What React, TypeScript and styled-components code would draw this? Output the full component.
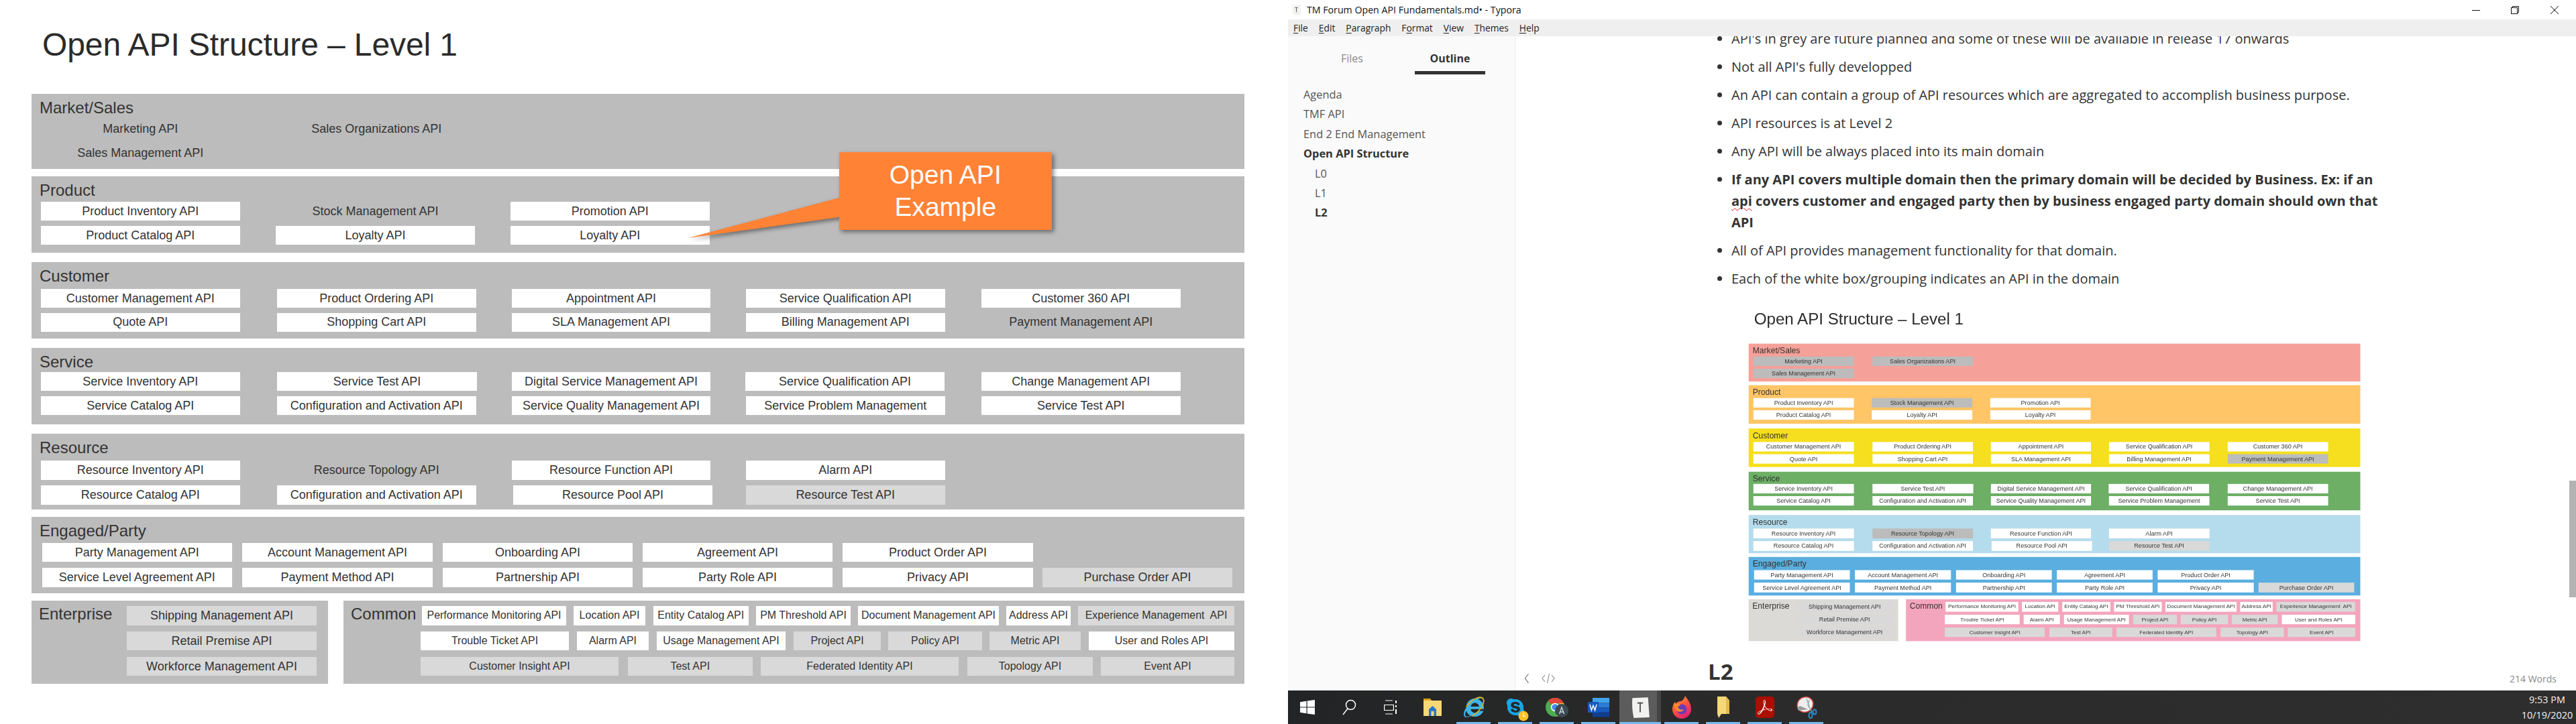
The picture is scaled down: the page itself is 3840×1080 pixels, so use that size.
import React from 'react';
import styled, { createGlobalStyle } from 'styled-components';
import { FaInternetExplorer, FaSkype } from 'react-icons/fa';
import { SiAdobeacrobatreader } from 'react-icons/si';

const Global = createGlobalStyle`
  html, body { margin: 0; padding: 0; background: #fff; }
  #root { width: 3840px; height: 1080px; overflow: hidden; }
`;

type Kind = 'w' | 'g' | 'l';
type Cell = [string, number, number, Kind];
type RowData = { y0: number; y1: number; cells: Cell[] };
type BandData = { name: string; color: string; top: number; bottom: number; rows: RowData[] };

const C1: [number, number] = [60.5, 358];
const C2: [number, number] = [412.5, 710];
const C3: [number, number] = [763, 1059];
const C4: [number, number] = [1111.5, 1409];
const C5: [number, number] = [1462.5, 1760];
const c = (t: string, col: [number, number], k: Kind = 'w'): Cell => [t, col[0], col[1], k];

const bands: BandData[] = [
  {
    name: 'Market/Sales', color: '#f5a098', top: 139.5, bottom: 252, rows: [
      { y0: 178, y1: 206, cells: [c('Marketing API', C1, 'g'), c('Sales Organizations API', C2, 'g')] },
      { y0: 214, y1: 242, cells: [c('Sales Management API', C1, 'g')] },
    ],
  },
  {
    name: 'Product', color: '#ffc566', top: 263, bottom: 377, rows: [
      { y0: 301, y1: 329, cells: [c('Product Inventory API', C1), c('Stock Management API', [411, 708], 'g'), c('Promotion API', [761, 1057.5])] },
      { y0: 337, y1: 365, cells: [c('Product Catalog API', C1), c('Loyalty API', [411, 708]), c('Loyalty API', [761, 1057.5])] },
    ],
  },
  {
    name: 'Customer', color: '#f5df1e', top: 391, bottom: 504.5, rows: [
      { y0: 431, y1: 459, cells: [c('Customer Management API', C1), c('Product Ordering API', C2), c('Appointment API', C3), c('Service Qualification API', C4), c('Customer 360 API', C5)] },
      { y0: 466.5, y1: 495, cells: [c('Quote API', C1), c('Shopping Cart API', C2), c('SLA Management API', C3), c('Billing Management API', C4), c('Payment Management API', C5, 'g')] },
    ],
  },
  {
    name: 'Service', color: '#6caf65', top: 519, bottom: 633, rows: [
      { y0: 555, y1: 583, cells: [c('Service Inventory API', C1), c('Service Test API', [413, 711]), c('Digital Service Management API', C3), c('Service Qualification API', [1111, 1408]), c('Change Management API', C5)] },
      { y0: 591, y1: 619, cells: [c('Service Catalog API', C1), c('Configuration and Activation API', C2), c('Service Quality Management API', C3), c('Service Problem Management', C4), c('Service Test API', C5)] },
    ],
  },
  {
    name: 'Resource', color: '#b4dcec', top: 647, bottom: 760, rows: [
      { y0: 687, y1: 716, cells: [c('Resource Inventory API', C1), c('Resource Topology API', C2, 'g'), c('Resource Function API', C3), c('Alarm API', C4)] },
      { y0: 723.5, y1: 752.5, cells: [c('Resource Catalog API', C1), c('Configuration and Activation API', C2), c('Resource Pool API', [765, 1062]), c('Resource Test API', C4, 'l')] },
    ],
  },
  {
    name: 'Engaged/Party', color: '#5aaee0', top: 771, bottom: 885, rows: [
      { y0: 810, y1: 838, cells: [c('Party Management API', [62.5, 346]), c('Account Management API', [361, 645]), c('Onboarding API', [660, 943]), c('Agreement API', [958, 1241]), c('Product Order API', [1256, 1540])] },
      { y0: 847, y1: 876, cells: [c('Service Level Agreement API', [62.5, 346]), c('Payment Method API', [361, 645]), c('Partnership API', [660, 943]), c('Party Role API', [958, 1241]), c('Privacy API', [1256, 1540]), c('Purchase Order API', [1554, 1837], 'l')] },
    ],
  },
];

const enterpriseRows: RowData[] = [
  { y0: 904, y1: 932.5, cells: [c('Shipping Management API', [189, 472], 'l')] },
  { y0: 942, y1: 970, cells: [c('Retail Premise API', [189, 472], 'l')] },
  { y0: 980, y1: 1008, cells: [c('Workforce Management API', [189, 472], 'l')] },
];

const commonRows: RowData[] = [
  { y0: 904, y1: 932.5, cells: [
    c('Performance Monitoring API', [629, 844]), c('Location API', [855, 962]), c('Entity Catalog API', [974, 1115.5]),
    c('PM Threshold API', [1127, 1268]), c('Document Management API', [1279, 1489]), c('Address API', [1500, 1596]),
    c('Experience Management\u00a0 API', [1607, 1840], 'l'),
  ] },
  { y0: 942, y1: 970, cells: [
    c('Trouble Ticket API', [627, 848]), c('Alarm API', [860, 967]), c('Usage Management API', [979, 1171]),
    c('Project API', [1183, 1313], 'l'), c('Policy API', [1324, 1464], 'l'), c('Metric API', [1475, 1611], 'l'),
    c('User and Roles API', [1623, 1840]),
  ] },
  { y0: 980, y1: 1008, cells: [
    c('Customer Insight API', [627, 922], 'l'), c('Test API', [935.5, 1122], 'l'), c('Federated Identity API', [1134, 1429], 'l'),
    c('Topology API', [1442, 1629], 'l'), c('Event API', [1641, 1840], 'l'),
  ] },
];

/* ---------- slide ---------- */
const SlideSheet = styled.div`
  position: relative;
  width: 1920px;
  height: 1030px;
  padding-left: 47px;
  box-sizing: border-box;
  font-family: 'Liberation Sans', Arial, sans-serif;
  color: #333;
  background: #fff;
  filter: blur(0.6px);
`;
const SlideTitle = styled.h1`
  margin: 0;
  padding: 0 0 6px 16px;
  height: 139.5px;
  box-sizing: border-box;
  display: flex;
  align-items: center;
  font-weight: 400;
  font-size: 48px;
  letter-spacing: -0.1px;
  color: #2b2b2b;
`;
const Band = styled.section<{ $h: number; $mt: number; $bg: string }>`
  width: 1808px;
  height: ${p => p.$h}px;
  margin-top: ${p => p.$mt}px;
  background: ${p => p.$bg};
  padding-top: 6px;
  box-sizing: border-box;
`;
const BandLabel = styled.div`
  height: 30px;
  line-height: 30px;
  padding-left: 12px;
  font-size: 24px;
`;
const ApiRow = styled.div<{ $h: number; $mt: number }>`
  display: flex;
  height: ${p => p.$h}px;
  margin-top: ${p => p.$mt}px;
`;
const boxBg: Record<Kind, string> = { w: '#ffffff', g: '#bcbcbc', l: '#d9d9d9' };
const ApiBox = styled.div<{ $w: number; $ml: number; $kind: Kind; $fs: number }>`
  flex: none;
  width: ${p => p.$w}px;
  margin-left: ${p => p.$ml}px;
  background: ${p => boxBg[p.$kind]};
  display: flex;
  align-items: center;
  justify-content: center;
  font-size: ${p => p.$fs}px;
  white-space: nowrap;
`;
const BottomRow = styled.div`
  display: flex;
  gap: 23px;
  margin-top: 11px;
`;
const SidePanel = styled.section<{ $w: number; $bg: string }>`
  width: ${p => p.$w}px;
  height: 124px;
  background: ${p => p.$bg};
  display: flex;
`;
const SideLabel = styled.div`
  flex: none;
  width: 0;
  padding: 5px 0 0 11px;
  line-height: 30px;
  font-size: 24px;
`;
const SideRows = styled.div`
  flex: 1;
`;
const Callout = styled.div`
  position: absolute;
  left: 1251px;
  top: 226.5px;
  width: 316.5px;
  height: 116px;
  filter: drop-shadow(3px 3px 3px rgba(0, 0, 0, 0.45));
`;
const CalloutBody = styled.div`
  position: relative;
  width: 100%;
  height: 100%;
  background: #ff8235;
  display: flex;
  align-items: center;
  justify-content: center;
  text-align: center;
  color: #fff;
  font-size: 39px;
  line-height: 47.5px;
`;
const CalloutTail = styled.svg`
  position: absolute;
  left: -226px;
  top: 60px;
  overflow: visible;
`;

function rowsOf(rows: RowData[], startY: number, startX: number, fs: number) {
  let prevY = startY;
  return rows.map((r, i) => {
    let prevX = startX;
    const el = (
      <ApiRow key={i} $h={r.y1 - r.y0} $mt={r.y0 - prevY}>
        {r.cells.map(([t, x0, x1, k], j) => {
          const box = <ApiBox key={j} $w={x1 - x0} $ml={x0 - prevX} $kind={k} $fs={fs}>{t}</ApiBox>;
          prevX = x1;
          return box;
        })}
      </ApiRow>
    );
    prevY = r.y1;
    return el;
  });
}

const Slide: React.FC<{ colored?: boolean }> = ({ colored }) => {
  let prev = 139.5;
  return (
    <SlideSheet>
      <SlideTitle>Open API Structure – Level 1</SlideTitle>
      {bands.map(b => {
        const el = (
          <Band key={b.name} $h={b.bottom - b.top} $mt={b.top - prev} $bg={colored ? b.color : '#bcbcbc'}>
            <BandLabel>{b.name}</BandLabel>
            {rowsOf(b.rows, b.top + 36, 47, 18)}
          </Band>
        );
        prev = b.bottom;
        return el;
      })}
      <BottomRow>
        <SidePanel $w={442} $bg={colored ? '#dcdad6' : '#bcbcbc'}>
          <SideLabel>Enterprise</SideLabel>
          <SideRows>{rowsOf(enterpriseRows, 896, 58, 18)}</SideRows>
        </SidePanel>
        <SidePanel $w={1343} $bg={colored ? '#f4a5be' : '#bcbcbc'}>
          <SideLabel>Common</SideLabel>
          <SideRows>{rowsOf(commonRows, 896, 523, 16)}</SideRows>
        </SidePanel>
      </BottomRow>
      {!colored && (
        <Callout>
          <CalloutTail width="226" height="80" viewBox="0 0 226 80">
            <polygon points="226,8 1,68 226,37" fill="#ff8235" />
          </CalloutTail>
          <CalloutBody>Open API<br />Example</CalloutBody>
        </Callout>
      )}
    </SlideSheet>
  );
};

/* ---------- window ---------- */
const Root = styled.div`
  display: flex;
  width: 3840px;
  height: 1080px;
  overflow: hidden;
  background: #fff;
`;
const LeftHalf = styled.div`
  width: 1920px;
  flex: none;
`;
const Win = styled.div`
  width: 1920px;
  flex: none;
  display: flex;
  flex-direction: column;
  height: 1080px;
  font-family: 'Open Sans', 'Noto Sans', sans-serif;
  color: #333;
`;
const TitleBar = styled.div`
  height: 29px;
  flex: none;
  display: flex;
  align-items: center;
  background: #fff;
  padding: 0 3px 0 4px;
  font-size: 14.2px;
  color: #111;
`;
const TitleText = styled.span`
  margin-left: 7px;
  flex: 1;
  white-space: pre;
`;
const WinButton = styled.div`
  width: 58.5px;
  height: 29px;
  display: flex;
  align-items: center;
  justify-content: center;
`;
const MenuBar = styled.nav`
  height: 25px;
  flex: none;
  background: #efefef;
  display: flex;
  align-items: center;
  padding-left: 8px;
  gap: 16px;
  font-size: 13.8px;
  color: #222;
`;
const MenuItem = styled.span`
  u { text-decoration-thickness: 1px; text-underline-offset: 2px; }
`;
const Body = styled.div`
  flex: 1;
  min-height: 0;
  display: flex;
`;
const Sidebar = styled.aside`
  width: 338px;
  flex: none;
  box-sizing: content-box;
  background: #fafafa;
  border-right: 1px solid #ececec;
  display: flex;
  flex-direction: column;
`;
const Tabs = styled.div`
  display: flex;
  height: 57px;
  flex: none;
  font-size: 16px;
`;
const Tab = styled.div<{ $active?: boolean; $w: number; $ml: number }>`
  width: ${p => p.$w}px;
  margin-left: ${p => p.$ml}px;
  height: 57px;
  box-sizing: border-box;
  padding-top: 20px;
  line-height: 26px;
  text-align: center;
  color: ${p => (p.$active ? '#333' : '#8a8a8a')};
  font-weight: ${p => (p.$active ? 700 : 400)};
  border-bottom: 5px solid ${p => (p.$active ? '#333' : 'transparent')};
`;
const Outline = styled.div`
  margin-top: 15px;
  padding-left: 23px;
`;
const OutlineItem = styled.div<{ $sub?: boolean; $bold?: boolean }>`
  height: 29.4px;
  line-height: 29.4px;
  font-size: 16.4px;
  padding-left: ${p => (p.$sub ? 17 : 0)}px;
  font-weight: ${p => (p.$bold ? 700 : 400)};
  color: ${p => (p.$bold ? '#333' : '#555')};
`;
const Main = styled.main`
  position: relative;
  flex: 1;
  min-width: 0;
  overflow: hidden;
  background: #fff;
`;
const Doc = styled.article`
  margin-top: -12px;
  padding-left: 287px;
  width: 1015px;
  font-size: 20px;
  line-height: 32px;
  color: #333;
`;
const Bullets = styled.ul`
  margin: 0;
  padding: 0 0 0 35px;
`;
const Bullet = styled.li`
  margin-bottom: 10px;
  &:last-child { margin-bottom: 0; }
`;
const Misspelt = styled.span`
  text-decoration: underline wavy #e01010 1px;
  text-underline-offset: 3px;
`;
const Thumb = styled.div`
  width: 968.3px;
  height: 519.4px;
  margin: 10px 0 0 37.3px;
`;
const ThumbInner = styled.div`
  width: 1920px;
  transform: scale(0.5043);
  transform-origin: 0 0;
`;
const Heading = styled.h2`
  margin: 21px 0 0;
  font-size: 33px;
  line-height: 40px;
  font-weight: 700;
`;
const StatusBar = styled.div`
  position: absolute;
  left: 0;
  right: 0;
  bottom: 0;
  height: 36px;
  display: flex;
  align-items: center;
  color: #888;
  font-size: 14px;
`;
const StatusIcon = styled.svg<{ $ml: number }>`
  flex: none;
  margin-left: ${p => p.$ml}px;
`;
const WordCount = styled.span`
  margin-left: auto;
  margin-right: 29px;
`;
const ScrollThumb = styled.div`
  position: absolute;
  right: 0;
  top: 663px;
  width: 10px;
  height: 174px;
  background: #b3b3b3;
`;

/* ---------- taskbar ---------- */
const Taskbar = styled.footer`
  height: 50px;
  flex: none;
  background: linear-gradient(90deg, #232425 0%, #2b2b2b 40%, #2e2e2e 100%);
  display: flex;
  color: #fff;
`;
const Slot = styled.div<{ $open?: boolean; $active?: boolean }>`
  flex: none;
  width: 62px;
  height: 50px;
  display: flex;
  align-items: center;
  justify-content: center;
  position: relative;
  box-sizing: border-box;
  background: ${p => (p.$active ? 'linear-gradient(90deg, #5c5c5c 56px, #444 56px)' : 'transparent')};
  ${p => p.$open && `
    &::after {
      content: '';
      position: absolute;
      left: ${p.$active ? 0 : 5}px;
      right: ${p.$active ? 0 : 6}px;
      bottom: 0;
      height: 3px;
      background: #76b9ed;
    }
  `}
`;
const SlotFirst = styled(Slot)`
  margin-left: -2px;
`;
const IconStack = styled.span`
  position: relative;
  display: flex;
`;
const IeRing = styled.svg`
  position: absolute;
  left: -3px;
  top: -3px;
`;
const SkypeBadge = styled.svg`
  position: absolute;
  right: -5px;
  bottom: -6px;
`;
const AcrobatTile = styled.span`
  width: 28px;
  height: 32px;
  border-radius: 5px;
  background: #aa0f00;
  display: flex;
  align-items: center;
  justify-content: center;
`;
const Clock = styled.div`
  margin-left: auto;
  margin-right: 3px;
  padding-top: 2px;
  width: 80px;
  text-align: center;
  font-size: 14.4px;
  line-height: 23px;
  color: #f2f2f2;
`;

const TyporaIcon: React.FC<{ size: number }> = ({ size }) => (
  <svg width={size} height={size} viewBox="0 0 32 32">
    <path d="M5 3 L27 2 L29 30 L7 31 Q4 18 5 3 Z" fill="#f2f2f0" />
    <path d="M12 10h8M16 10v13" stroke="#444" strokeWidth="1.6" fill="none" />
  </svg>
);

const Icons = {
  start: (
    <svg width="22" height="22" viewBox="0 0 22 22">
      <path d="M0 3.2 L9.5 1.8 V10.4 H0 Z M10.7 1.6 L22 0 V10.4 H10.7 Z M0 11.6 H9.5 V20.2 L0 18.8 Z M10.7 11.6 H22 V22 L10.7 20.4 Z" fill="#fff" />
    </svg>
  ),
  search: (
    <svg width="22" height="24" viewBox="0 0 22 24" fill="none" stroke="#fff" strokeWidth="1.5">
      <circle cx="13.5" cy="8.5" r="7" />
      <path d="M9 14 L2 23" />
    </svg>
  ),
  task: (
    <svg width="20" height="22" viewBox="0 0 20 22" fill="none" stroke="#fff" strokeWidth="1.2">
      <path d="M2 1H13M2 21H13M0.6 7.5H14.4V15.5H0.6Z" />
      <path d="M18 1V5M18 8V11M18 14V21" strokeWidth="2" />
    </svg>
  ),
  explorer: (
    <svg width="30" height="28" viewBox="0 0 30 28">
      <path d="M2 1H12L15 5H2Z" fill="#d9a21b" />
      <rect x="2" y="4" width="27" height="23" fill="#f8d775" />
      <path d="M10 27V17L15.5 12L21 17V27H17.5V20H13.5V27Z" fill="#2a78c4" />
    </svg>
  ),
  ie: (
    <IconStack>
      <FaInternetExplorer size={30} color="#3db4ea" />
      <IeRing width="36" height="36" viewBox="0 0 36 36" fill="none">
        <ellipse cx="18" cy="18" rx="19" ry="9" transform="rotate(-45 18 18)" stroke="#e2b013" strokeWidth="1.6" strokeDasharray="34 26" />
      </IeRing>
    </IconStack>
  ),
  skype: (
    <IconStack>
      <FaSkype size={30} color="#19a6e6" />
      <SkypeBadge width="16" height="16" viewBox="0 0 16 16">
        <circle cx="8" cy="8" r="7.5" fill="#fbc02d" />
        <path d="M8 3.5V8.5H11.5" stroke="#fff" strokeWidth="1.2" fill="none" />
      </SkypeBadge>
    </IconStack>
  ),
  chrome: (
    <svg width="34" height="32" viewBox="0 0 34 32">
      <circle cx="14" cy="16" r="14" fill="#4bae4f" />
      <path d="M14 2A14 14 0 0 1 27 10H14A6 6 0 0 0 8.5 13L4 6A14 14 0 0 1 14 2Z" fill="#e2453a" />
      <path d="M27 10A14 14 0 0 1 16 29.8L21 19A6 6 0 0 0 20 10Z" fill="#fbc52f" />
      <circle cx="14" cy="16" r="5.5" fill="#4a8af4" stroke="#fff" strokeWidth="1.5" />
      <circle cx="24" cy="21" r="10" fill="#3c4a52" />
      <path d="M20.5 26L24 16L27.5 26M21.8 23H26.2" stroke="#cfd8dc" strokeWidth="1.4" fill="none" />
    </svg>
  ),
  word: (
    <svg width="32" height="30" viewBox="0 0 32 30">
      <rect x="7" y="1" width="25" height="7.5" fill="#41a5ee" />
      <rect x="7" y="8.5" width="25" height="7" fill="#2b7cd3" />
      <rect x="7" y="15.5" width="25" height="7" fill="#185abd" />
      <rect x="7" y="22.5" width="25" height="7" fill="#103f91" />
      <rect x="0" y="7" width="16" height="16" fill="#185abd" rx="1" />
      <path d="M3 11L5.4 19.5L8 12.5L10.6 19.5L13 11" stroke="#fff" strokeWidth="1.5" fill="none" />
    </svg>
  ),
  firefox: (
    <svg width="30" height="34" viewBox="0 0 30 34">
      <defs>
        <linearGradient id="ffx" x1="0" y1="0" x2="0.6" y2="1">
          <stop offset="0" stopColor="#ffb12c" />
          <stop offset="0.5" stopColor="#ff5a3b" />
          <stop offset="1" stopColor="#e2226f" />
        </linearGradient>
      </defs>
      <path d="M20 0C24 6 29 11 29 20A14 14 0 1 1 1 20C1 15 3 11 5 9L6 12C8 9 11 8 14 8C17 6 19 4 20 0Z" fill="url(#ffx)" />
      <circle cx="15" cy="20" r="7.5" fill="#6b3bb8" />
      <path d="M4 13C8 10 12 12 13 14L9 16C10 20 14 22 18 20C16 25 8 25 6 20C5 18 4 16 4 13Z" fill="#ff8a2b" />
    </svg>
  ),
  sticky: (
    <svg width="20" height="34" viewBox="0 0 20 34">
      <path d="M1 1H14L19 7V27H7L3 33L1 27Z" fill="#f6d77a" />
      <path d="M14 1L19 7V27H14Z" fill="#e3b94e" />
    </svg>
  ),
  acrobat: (
    <AcrobatTile>
      <SiAdobeacrobatreader size={22} color="#fff" />
    </AcrobatTile>
  ),
  snip: (
    <svg width="32" height="34" viewBox="0 0 32 34">
      <ellipse cx="14" cy="13" rx="12" ry="11" fill="#eee" stroke="#d9534f" strokeWidth="1.5" transform="rotate(-30 14 13)" />
      <path d="M6 15L2 18L4 22L18 20Z" fill="#9a9a9a" />
      <path d="M16 4L22 22M20 6L18 14L24 24" stroke="#9aa" strokeWidth="1.4" fill="none" />
      <ellipse cx="22" cy="29" rx="2.4" ry="4.2" fill="none" stroke="#1f8dd6" strokeWidth="2" />
      <ellipse cx="28" cy="24" rx="2.4" ry="3.6" fill="none" stroke="#1f8dd6" strokeWidth="2" />
    </svg>
  ),
};

const menu: [string, string, string][] = [
  ['', 'F', 'ile'], ['', 'E', 'dit'], ['', 'P', 'aragraph'], ['F', 'o', 'rmat'], ['', 'V', 'iew'], ['', 'T', 'hemes'], ['', 'H', 'elp'],
];

export default function App() {
  return (
    <Root>
      <Global />
      <LeftHalf><Slide /></LeftHalf>
      <Win>
        <TitleBar>
          <TyporaIcon size={17} />
          <TitleText>TM Forum Open API Fundamentals.md• - Typora</TitleText>
          <WinButton>
            <svg width="12" height="12" viewBox="0 0 12 12"><path d="M0 6.5H12" stroke="#111" /></svg>
          </WinButton>
          <WinButton>
            <svg width="12" height="12" viewBox="0 0 12 12" fill="none" stroke="#111"><rect x="0.5" y="2.5" width="9" height="9" /><path d="M2.5 2.5V0.5H11.5V9.5H9.5" /></svg>
          </WinButton>
          <WinButton>
            <svg width="12" height="12" viewBox="0 0 12 12" fill="none" stroke="#111"><path d="M0 0L12 12M12 0L0 12" /></svg>
          </WinButton>
        </TitleBar>
        <MenuBar>
          {menu.map(([a, b, d]) => (
            <MenuItem key={a + b + d}>{a}<u>{b}</u>{d}</MenuItem>
          ))}
        </MenuBar>
        <Body>
          <Sidebar>
            <Tabs>
              <Tab $w={105} $ml={43}>Files</Tab>
              <Tab $w={105} $ml={41} $active>Outline</Tab>
            </Tabs>
            <Outline>
              <OutlineItem>Agenda</OutlineItem>
              <OutlineItem>TMF API</OutlineItem>
              <OutlineItem>End 2 End Management</OutlineItem>
              <OutlineItem $bold>Open API Structure</OutlineItem>
              <OutlineItem $sub>L0</OutlineItem>
              <OutlineItem $sub>L1</OutlineItem>
              <OutlineItem $sub $bold>L2</OutlineItem>
            </Outline>
          </Sidebar>
          <Main>
            <Doc>
              <Bullets>
                <Bullet>API's in grey are future planned and some of these will be available in release 17 onwards</Bullet>
                <Bullet>Not all API's fully developped</Bullet>
                <Bullet>An API can contain a group of API resources which are aggregated to accomplish business purpose.</Bullet>
                <Bullet>API resources is at Level 2</Bullet>
                <Bullet>Any API will be always placed into its main domain</Bullet>
                <Bullet>
                  <strong>If any API covers multiple domain then the primary domain will be decided by Business. Ex: if an <Misspelt>api</Misspelt> covers customer and engaged party then by business engaged party domain should own that API</strong>
                </Bullet>
                <Bullet>All of API provides management functionality for that domain.</Bullet>
                <Bullet>Each of the white box/grouping indicates an API in the domain</Bullet>
              </Bullets>
              <Thumb><ThumbInner><Slide colored /></ThumbInner></Thumb>
              <Heading>L2</Heading>
            </Doc>
            <StatusBar>
              <StatusIcon $ml={12} width="10" height="16" viewBox="0 0 10 16" fill="none" stroke="#777" strokeWidth="1.2">
                <path d="M7.5 1L2.5 8L7.5 15" />
              </StatusIcon>
              <StatusIcon $ml={17} width="20" height="16" viewBox="0 0 20 16" fill="none" stroke="#888" strokeWidth="1.1">
                <path d="M5 3L1 8L5 13M15 3L19 8L15 13M11.5 1L8.5 15" />
              </StatusIcon>
              <WordCount>214 Words</WordCount>
            </StatusBar>
            <ScrollThumb />
          </Main>
        </Body>
        <Taskbar>
          <SlotFirst>{Icons.start}</SlotFirst>
          <Slot>{Icons.search}</Slot>
          <Slot>{Icons.task}</Slot>
          <Slot>{Icons.explorer}</Slot>
          <Slot $open>{Icons.ie}</Slot>
          <Slot $open>{Icons.skype}</Slot>
          <Slot $open>{Icons.chrome}</Slot>
          <Slot $open>{Icons.word}</Slot>
          <Slot $open $active><TyporaIcon size={34} /></Slot>
          <Slot $open>{Icons.firefox}</Slot>
          <Slot $open>{Icons.sticky}</Slot>
          <Slot $open>{Icons.acrobat}</Slot>
          <Slot $open>{Icons.snip}</Slot>
          <Clock>9:53 PM<br />10/19/2020</Clock>
        </Taskbar>
      </Win>
    </Root>
  );
}
